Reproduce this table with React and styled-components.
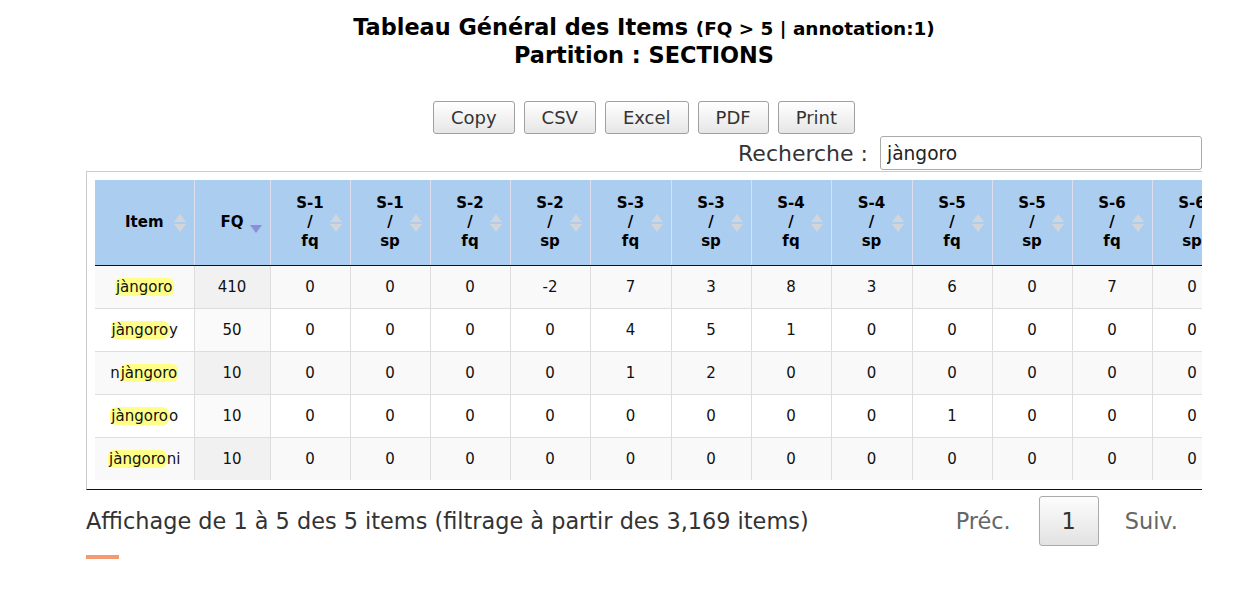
import React from "react";
import styled, { createGlobalStyle } from "styled-components";

const GlobalStyle = createGlobalStyle`
  body {
    margin: 0;
    background: #fff;
    font-family: "DejaVu Sans", sans-serif;
    color: #111;
  }
`;

const Page = styled.div`
  width: 1116px;
  margin-left: 86px;
  padding-top: 14px;
`;

const Title = styled.h2`
  margin: 0;
  text-align: center;
  font-size: 22.4px;
  font-weight: 700;
  line-height: 27px;
  color: #000;
`;

const Small = styled.span`
  font-size: 18.4px;
`;

const Buttons = styled.div`
  display: flex;
  justify-content: center;
  gap: 9px;
  margin-top: 32px;
`;

const Btn = styled.button`
  height: 33px;
  padding: 0 17px;
  border: 1px solid #a0a0a0;
  border-radius: 3px;
  background: linear-gradient(#ffffff, #e6e6e6);
  font-family: "DejaVu Sans", sans-serif;
  font-size: 18px;
  color: #333;
`;

const SearchRow = styled.div`
  display: flex;
  justify-content: flex-end;
  align-items: center;
  gap: 12px;
  margin: 2px 0 1px;
`;

const Label = styled.label`
  font-family: "DejaVu Sans", sans-serif;
  font-size: 22px;
  color: #333;
`;

const Input = styled.input`
  width: 322px;
  height: 34px;
  box-sizing: border-box;
  border: 1px solid #aaa;
  border-radius: 3px;
  padding: 0 6px;
  font-family: "DejaVu Sans", sans-serif;
  font-size: 18.6px;
  color: #222;
`;

const Frame = styled.div`
  border-top: 1px solid #ccc;
  border-left: 1px solid #ccc;
  border-bottom: 1px solid #111;
  padding: 8px 0 9px 8px;
  overflow: hidden;
`;

const Table = styled.table`
  border-collapse: collapse;
  table-layout: fixed;
  width: 1297px;
  font-size: 15px;
`;

const Th = styled.th`
  position: relative;
  height: 85px;
  padding: 0;
  background: #abcdef;
  border-right: 1px solid #dde;
  border-bottom: 1px solid #111;
  font-weight: 700;
  font-size: 15px;
  line-height: 19px;
  color: #000;
  text-align: center;
`;

const Sort = styled.span`
  position: absolute;
  right: 8px;
  top: 50%;
  transform: translateY(-50%);
  display: flex;
  flex-direction: column;
  gap: 2px;
  &::before,
  &::after {
    content: "";
    border-left: 6px solid transparent;
    border-right: 6px solid transparent;
  }
  &::before {
    border-bottom: 8px solid #d2d6da;
  }
  &::after {
    border-top: 8px solid #d2d6da;
  }
`;

const Down = styled.span`
  position: absolute;
  right: 8px;
  top: 45px;
  border-left: 6px solid transparent;
  border-right: 6px solid transparent;
  border-top: 8px solid #8d8ddb;
`;

const Tr = styled.tr`
  background: ${(p) => (p.odd ? "#f9f9f9" : "#fff")};
`;

const Td = styled.td`
  height: 42px;
  padding: 0;
  text-align: center;
  border-right: 1px solid #ddd;
  border-top: 1px solid #ddd;
  color: #111;
  background: ${(p) => (p.sorted ? (p.odd ? "#f1f1f1" : "#fafafa") : "transparent")};
`;

const Mark = styled.mark`
  background: #ffff88;
  border-radius: 6px;
  padding: 0 1px;
  color: inherit;
`;

const Footer = styled.div`
  display: flex;
  justify-content: space-between;
  align-items: center;
  margin-top: 6px;
`;

const Info = styled.div`
  font-size: 22.4px;
  color: #333;
`;

const Pager = styled.div`
  display: flex;
  align-items: center;
  gap: 26px;
  padding-right: 24px;
  font-size: 22.4px;
  color: #666;
`;

const PagerLink = styled.span`
  margin-right: ${(p) => p.extra || 0}px;
`;

const PageBtn = styled.span`
  display: flex;
  align-items: center;
  justify-content: center;
  width: 58px;
  height: 48px;
  border: 1px solid #aaa;
  border-radius: 3px;
  background: linear-gradient(#fdfdfd, #e2e2e2);
  color: #333;
`;

const Accent = styled.div`
  width: 33px;
  height: 4px;
  margin-top: 9px;
  background: #f59a70;
`;

const sCols = [];
for (let i = 1; i <= 7; i++) {
  sCols.push({ s: i, k: "fq" });
  sCols.push({ s: i, k: "sp" });
}

const rows = [
  { item: ["", "jàngoro", ""], fq: 410, v: [0, 0, 0, -2, 7, 3, 8, 3, 6, 0, 7, 0, 0, 0] },
  { item: ["", "jàngoro", "y"], fq: 50, v: [0, 0, 0, 0, 4, 5, 1, 0, 0, 0, 0, 0, 0, 0] },
  { item: ["n", "jàngoro", ""], fq: 10, v: [0, 0, 0, 0, 1, 2, 0, 0, 0, 0, 0, 0, 0, 0] },
  { item: ["", "jàngoro", "o"], fq: 10, v: [0, 0, 0, 0, 0, 0, 0, 0, 1, 0, 0, 0, 0, 0] },
  { item: ["", "jàngoro", "ni"], fq: 10, v: [0, 0, 0, 0, 0, 0, 0, 0, 0, 0, 0, 0, 0, 0] },
];

const colW = [80, 80, 80, 80, 81, 80, 80, 81, 80, 80, 80, 80, 80, 80];

export default function App() {
  return (
    <>
      <GlobalStyle />
      <Page>
        <Title>
          Tableau Général des Items <Small>(FQ &gt; 5 | annotation:1)</Small>
          <br />
          Partition : SECTIONS
        </Title>
        <Buttons>
          <Btn>Copy</Btn>
          <Btn>CSV</Btn>
          <Btn>Excel</Btn>
          <Btn>PDF</Btn>
          <Btn>Print</Btn>
        </Buttons>
        <SearchRow>
          <Label>Recherche :</Label>
          <Input defaultValue="jàngoro" />
        </SearchRow>
        <Frame>
          <Table>
            <colgroup>
              <col style={{ width: 99 }} />
              <col style={{ width: 76 }} />
              {colW.map((w, i) => (
                <col key={i} style={{ width: w }} />
              ))}
            </colgroup>
            <thead>
              <tr>
                <Th>
                  Item
                  <Sort />
                </Th>
                <Th>
                  FQ
                  <Down />
                </Th>
                {sCols.map((c, i) => (
                  <Th key={i}>
                    S-{c.s}
                    <br />/<br />
                    {c.k}
                    <Sort />
                  </Th>
                ))}
              </tr>
            </thead>
            <tbody>
              {rows.map((r, ri) => {
                const odd = ri % 2 === 0;
                return (
                  <Tr key={ri} odd={odd}>
                    <Td>
                      {r.item[0]}
                      <Mark>{r.item[1]}</Mark>
                      {r.item[2]}
                    </Td>
                    <Td sorted odd={odd}>
                      {r.fq}
                    </Td>
                    {r.v.map((v, i) => (
                      <Td key={i}>{v}</Td>
                    ))}
                  </Tr>
                );
              })}
            </tbody>
          </Table>
        </Frame>
        <Footer>
          <Info>Affichage de 1 à 5 des 5 items (filtrage à partir des 3,169 items)</Info>
          <Pager>
            <PagerLink extra={2}>Préc.</PagerLink>
            <PageBtn>1</PageBtn>
            <PagerLink>Suiv.</PagerLink>
          </Pager>
        </Footer>
        <Accent />
      </Page>
    </>
  );
}
